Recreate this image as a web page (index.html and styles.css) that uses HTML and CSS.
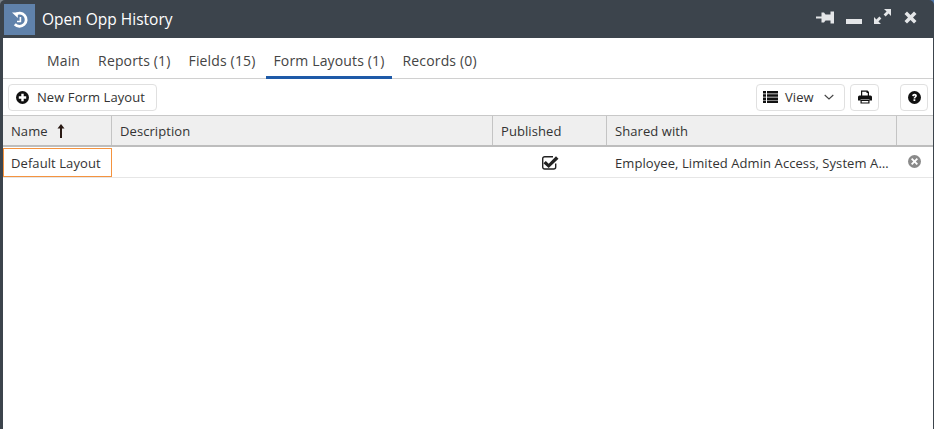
FILE: index.html
```html
<!DOCTYPE html>
<html lang="en">
<head>
<meta charset="utf-8">
<title>Open Opp History</title>
<link rel="stylesheet" href="styles.css">
</head>
<body>
<div class="window">
  <header class="titlebar">
    <span class="app-icon">
      <svg width="20" height="20" viewBox="0 0 20 20"><path d="M5.300 4.700 A6.600 6.600 0 1 1 4.800 14.300" fill="none" stroke="#fff" stroke-width="2.800"/><path d="M2 2.500 L7.800 2.500 L7.800 8 Z" fill="#fff"/><path d="M10.400 7 V11.500 H7" fill="none" stroke="#fff" stroke-width="1.600"/></svg>
    </span>
    <span class="title">Open Opp History</span>
    <span class="win-controls">
      <svg class="wc-pin" width="18" height="13" viewBox="0 0 18 13"><path d="M0 5.600H5.500V1.500H8L9.500 3.500H14.500V.5H18V12.500H14.500V9.500H9.500L8 11.500H5.500V7.400H0z" fill="#e4e6e8"/></svg>
      <svg class="wc-min" width="16" height="15" viewBox="0 0 16 15"><rect x="0" y="10" width="16" height="5" fill="#e4e6e8"/></svg>
      <svg class="wc-max" width="17" height="15" viewBox="0 0 17 15"><path d="M10 0h7v7l-2.400-2.400-3 2.900-2-2 3-2.900zM0 15V8l2.400 2.400 3-2.900 2 2-3 2.900L7 15z" fill="#e4e6e8"/></svg>
      <svg class="wc-close" width="13" height="13" viewBox="0 0 13 13"><path d="M3 .5 6.500 4 10 .5 12.500 3 9 6.500 12.500 10 10 12.500 6.500 9 3 12.500 .5 10 4 6.500 .5 3z" fill="#e4e6e8"/></svg>
    </span>
  </header>
  <div class="content">
    <nav class="tabs">
      <a class="tab">Main</a>
      <a class="tab">Reports (1)</a>
      <a class="tab">Fields (15)</a>
      <a class="tab active">Form Layouts (1)</a>
      <a class="tab">Records (0)</a>
    </nav>
    <div class="toolbar">
      <button class="btn btn-new">
        <svg width="13" height="13" viewBox="0 0 13 13"><circle cx="6.500" cy="6.500" r="6.500" fill="#111"/><path d="M2.800 5.300h2.500V2.800h2.400v2.500h2.500v2.400H7.700v2.500H5.300V7.700H2.800z" fill="#fff"/></svg>
        New Form Layout
      </button>
      <span class="spacer"></span>
      <button class="btn btn-view">
        <svg width="15" height="12" viewBox="0 0 15 12"><path d="M0 0h3v2.500H0zM4 0h11v2.500H4zM0 3.200h3v2.500H0zM4 3.200h11v2.500H4zM0 6.400h3v2.500H0zM4 6.400h11v2.500H4zM0 9.500h3V12H0zM4 9.500h11V12H4z" fill="#111"/></svg>
        View
        <svg class="chev" width="10" height="6" viewBox="0 0 10 6"><path d="M.7 1 5 5 9.300 1" fill="none" stroke="#444" stroke-width="1.100"/></svg>
      </button>
      <button class="btn btn-icon">
        <svg width="14" height="14" viewBox="0 0 14 14"><path d="M3 5.500V.5h6.500L11 2v3.500H9.800V3H8.500V1.700H4.200v3.800zM1.500 5.500h11A1.500 1.500 0 0 1 14 7v3.500h-2.500V9.500h-9v1H0V7a1.500 1.500 0 0 1 1.500-1.500zM2.500 10h9v3.500h-9zM3.700 11v1.400h6.600V11z" fill="#111" fill-rule="evenodd"/></svg>
      </button>
      <button class="btn btn-icon btn-help">
        <svg width="13" height="13" viewBox="0 0 13 13"><circle cx="6.500" cy="6.500" r="6.500" fill="#111"/><path d="M4.200 4.900c0-1.300 1.100-2.100 2.400-2.100s2.300.8 2.300 2c0 1.600-1.600 1.600-1.600 2.700H5.600c0-1.900 1.500-1.800 1.500-2.600 0-.3-.2-.5-.5-.5s-.6.300-.6.800zM5.500 8.300h1.800v1.800H5.500z" fill="#fff"/></svg>
      </button>
    </div>
    <div class="grid-wrap">
      <div class="row head">
        <div class="cell c-name">Name
          <svg class="sort" width="8" height="14" viewBox="0 0 8 14"><path d="M4 0 7.500 4.500H5V14H3V4.500H.5z" fill="#2a1a14"/></svg>
        </div>
        <div class="cell c-desc">Description</div>
        <div class="cell c-pub">Published</div>
        <div class="cell c-share">Shared with</div>
        <div class="cell c-act"></div>
      </div>
      <div class="row body">
        <div class="cell c-name focus">Default Layout</div>
        <div class="cell c-desc"></div>
        <div class="cell c-pub center">
          <svg width="17" height="15" viewBox="0 0 17 15"><path d="M13.700 8.500V12a2 2 0 0 1-2 2H2.700a2 2 0 0 1-2-2V3.700a2 2 0 0 1 2-2H11" fill="none" stroke="#222" stroke-width="1.400"/><path d="M3.800 6 6.700 8.800 14 1.300 16.500 3.800 6.700 13 1.400 8.300z" fill="#222"/></svg>
        </div>
        <div class="cell c-share ell">Employee, Limited Admin Access, System Administrator</div>
        <div class="cell c-act">
          <svg width="13" height="13" viewBox="0 0 13 13"><circle cx="6.500" cy="6.500" r="6.500" fill="#8a8a8a"/><path d="M4.300 3 6.500 5.200 8.700 3 10 4.300 7.800 6.500 10 8.700 8.700 10 6.500 7.800 4.300 10 3 8.700 5.200 6.500 3 4.300z" fill="#fff"/></svg>
        </div>
      </div>
    </div>
  </div>
</div>
</body>
</html>
```
FILE: styles.css
```css
* { box-sizing: border-box; }
html, body { margin: 0; height: 100%; overflow: hidden; }
body { background: linear-gradient(90deg, #7d858d 50%, #4f76a8 50%); font-family: "Open Sans", sans-serif; font-size: 13px; letter-spacing: .08px; color: #333; }
.window { width: 934px; height: 429px; display: flex; flex-direction: column; background: #3c444c; border-radius: 5px 5px 0 0; padding: 0 1px 0 3px; }
.titlebar { height: 38px; flex: none; display: flex; align-items: flex-start; margin-right: -1px; }
.app-icon { width: 31px; height: 31px; margin: 4px 0 0 1px; background: #6082ab; display: flex; align-items: center; justify-content: center; }
.title { color: #fff; font-size: 15.500px; letter-spacing: 0; line-height: 20px; margin: 9px 0 0 7px; }
.win-controls { margin-left: auto; display: flex; align-items: flex-start; padding: 9px 17px 0 0; }
.wc-pin { margin-top: 2px; }
.wc-min { margin-left: 12px; }
.wc-max { margin-left: 12px; }
.wc-close { margin: 2px 0 0 13px; }
.content { flex: 1; background: #fff; display: flex; flex-direction: column; min-height: 0; }
.tabs { height: 41px; flex: none; display: flex; padding: 0 0 0 37px; gap: 4px; border-bottom: 1px solid #d0d0d0; font-size: 14px; letter-spacing: .15px; color: #444; }
.tab { padding: 13px 7px 0; line-height: 20px; border-bottom: 3px solid transparent; height: 41px; }
.tab.active { border-bottom-color: #1e5aa8; }
.toolbar { height: 36px; flex: none; display: flex; align-items: center; padding: 0 5px; }
.spacer { flex: 1; }
.btn { height: 27px; background: #fff; border: 1px solid #e0e0e0; border-radius: 4px; font: inherit; letter-spacing: inherit; color: #333; display: flex; align-items: center; padding: 0; }
.btn-new { width: 149px; padding-left: 7px; gap: 8px; }
.btn-view { width: 89px; padding-left: 6px; gap: 7px; margin-right: 5px; }
.chev { margin-left: 3px; }
.btn-icon { width: 29px; justify-content: center; }
.btn-help { width: 28px; margin-left: 21px; }
.grid-wrap { flex: 1; }
.row { display: flex; }
.head { height: 32px; background: #efefef; border-top: 1px solid #c8c8c8; border-bottom: 2px solid #bdbdbd; }
.body { height: 31px; border-bottom: 1px solid #e6e6e6; }
.cell { padding: 0 8px; display: flex; align-items: center; white-space: nowrap; }
.head .cell { border-right: 1px solid #c4c4c4; }
.c-name { width: 109px; flex: none; }
.c-desc { width: 381px; flex: none; }
.c-pub { width: 114px; flex: none; }
.c-share { width: 290px; flex: none; }
.c-act { flex: 1; padding: 0 0 0 11px; }
.head .c-act { border-right: 0; }
.sort { margin-left: 9px; }
.row .focus { border: 1px solid #f4933f; padding: 0 7px; height: 29px; margin-top: 1px; }
.center { justify-content: center; }
.ell { display: block; line-height: 32px; overflow: hidden; text-overflow: ellipsis; }
.body .c-act { align-items: flex-start; padding-top: 8px; }
```
